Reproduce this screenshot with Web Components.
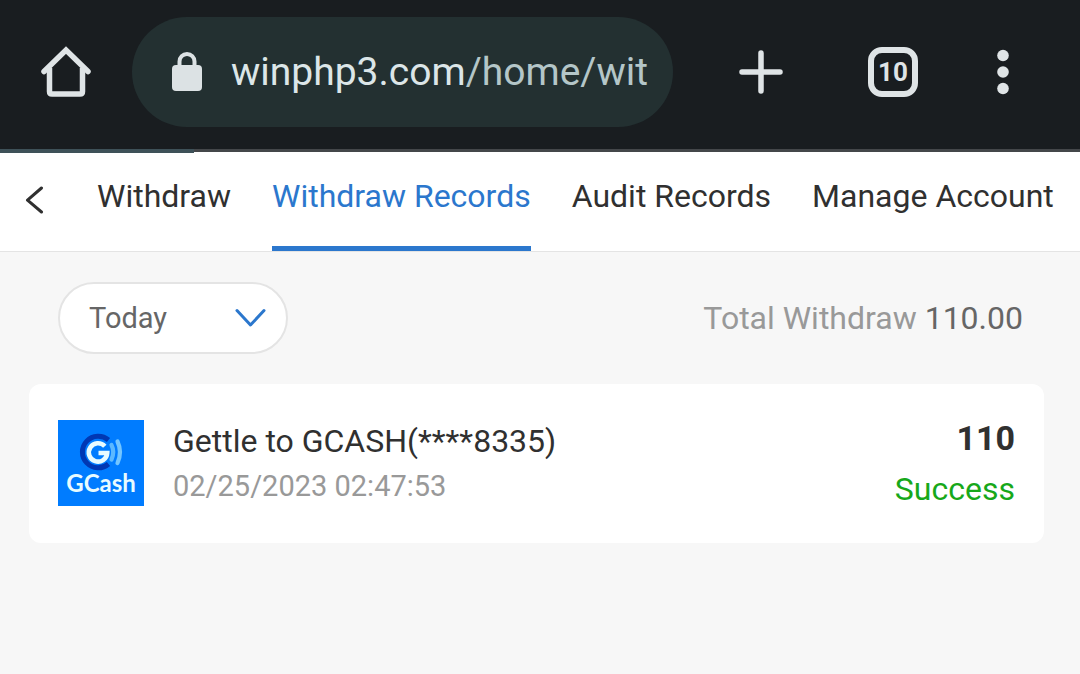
<!DOCTYPE html>
<html lang="en">
<head>
<meta charset="utf-8">
<meta name="viewport" content="width=device-width, initial-scale=1">
<title>Withdraw Records</title>
<style>
  html { background: #f7f7f7; }
  body { margin: 0; font-family: Roboto, "Liberation Sans", sans-serif; color: #303030; }
</style>
</head>
<body>
<browser-bar tabs="10" host="winphp3.com" path="/home/wit"></browser-bar>
<tab-nav>
  <tab-link href="#withdraw">Withdraw</tab-link>
  <tab-link href="#records" active>Withdraw Records</tab-link>
  <tab-link href="#audit">Audit Records</tab-link>
  <tab-link href="#account">Manage Account</tab-link>
</tab-nav>
<records-page>
  <range-select slot="filter"></range-select>
  <total-amount slot="total" label="Total Withdraw">110.00</total-amount>
  <record-card>
    <gcash-logo slot="logo"></gcash-logo>
    <span slot="title">Gettle to GCASH(****8335)</span>
    <time slot="time" datetime="2023-02-25T02:47:53">02/25/2023 02:47:53</time>
    <span slot="amount">110</span>
    <span slot="status">Success</span>
  </record-card>
</records-page>

<script>
class BaseElement extends HTMLElement {
  connectedCallback() {
    if (!this.shadowRoot) this.attachShadow({ mode: "open" }).innerHTML = this.render();
  }
}
const attr = (el, name) => el.getAttribute(name) || "";

customElements.define("browser-bar", class extends BaseElement {
  render() {
    return `
    <style>
      :host { display: block; background: #191d20; color: #dfe4e6; }
      header { display: grid; grid-template-columns: 132px 1fr 176px 88px 132px; align-items: center; padding: 17px 11px 22px 0; }
      button { font: inherit; color: inherit; background: none; border: 0; padding: 0; display: flex; align-items: center; justify-content: center; height: 110px; min-width: 0; }
      svg { display: block; flex: none; }
      .url { background: #233031; border-radius: 55px; padding: 0 20px 0 39px; gap: 28px; justify-content: flex-start; font: 39px/48px Roboto, sans-serif; color: #dce6e8; }
      .text { white-space: nowrap; }
      .path { color: #b4c6c8; }
      .count { box-sizing: border-box; width: 50px; height: 50px; border: 6px solid #dfe4e6; border-radius: 14px; font: bold 26px/38px Roboto, sans-serif; text-align: center; }
      .line { height: 3px; background: #44474a; }
      .progress { height: 4px; width: 18%; background: #3e5158; position: relative; }
    </style>
    <header>
      <button aria-label="Home"><svg width="52" height="52" viewBox="0 0 52 52" fill="none" stroke="#dfe4e6" stroke-width="5.5" stroke-linecap="round" stroke-linejoin="round"><path d="M4 25.500L26 4L48 25.500" stroke-linejoin="miter"/><path d="M9.500 22V45.500Q9.500 48 12 48H40Q42.500 48 42.500 45.500V22" stroke-linecap="butt"/></svg></button>
      <button class="url" aria-label="Address">
        <svg width="32" height="40" viewBox="0 0 32 40"><rect x="1" y="13" width="30" height="26" rx="4" fill="#dce2e4"/><path d="M8.500 15V9.500a7.500 7.500 0 0 1 15 0V15" fill="none" stroke="#dce2e4" stroke-width="4"/></svg>
        <span class="text">${attr(this, "host")}<span class="path">${attr(this, "path")}</span></span>
      </button>
      <button aria-label="New tab"><svg width="44" height="44" viewBox="0 0 44 44" stroke="#dfe4e6" stroke-width="5.500" stroke-linecap="round"><path d="M22 3V41M3 22H41"/></svg></button>
      <button aria-label="Open tabs"><span class="count">${attr(this, "tabs")}</span></button>
      <button aria-label="Menu"><svg width="12" height="46" viewBox="0 0 12 46" fill="#dfe4e6"><circle cx="6" cy="6.500" r="5.800"/><circle cx="6" cy="23" r="5.800"/><circle cx="6" cy="39.500" r="5.800"/></svg></button>
    </header>
    <div class="line"><div class="progress"></div></div>`;
  }
});

customElements.define("tab-nav", class extends BaseElement {
  render() {
    return `
    <style>
      :host { display: block; background: #fff; border-bottom: 1px solid #e4e4e4; }
      div { display: flex; }
      nav { display: flex; gap: 41px; }
      button { width: 97px; flex: none; padding: 0 0 4px 25px; border: 0; background: none; text-align: left; }
      svg { display: block; }
    </style>
    <div>
      <button aria-label="Back"><svg width="20" height="28" viewBox="0 0 20 28" fill="none" stroke="#303030" stroke-width="3" stroke-linecap="round" stroke-linejoin="round"><path d="M16.500 2L2.500 14.200L16.500 26"/></svg></button>
      <nav><slot></slot></nav>
    </div>`;
  }
});

customElements.define("tab-link", class extends BaseElement {
  render() {
    return `
    <style>
      :host { display: block; color: #303030; }
      :host([active]) { color: #2b77cd; }
      a { display: block; color: inherit; text-decoration: none; white-space: nowrap; font-size: 32px; line-height: 38px; padding: 25px 0 31px; border-bottom: 5px solid transparent; }
      :host([active]) a { border-color: #2b77cd; }
    </style>
    <a href="${attr(this, "href")}"><slot></slot></a>`;
  }
});

customElements.define("records-page", class extends BaseElement {
  render() {
    return `
    <style>
      :host { display: block; padding: 30px 36px 30px 29px; }
      .bar { display: flex; justify-content: space-between; align-items: center; margin-bottom: 30px; padding: 0 21px 0 29px; }
    </style>
    <main><div class="bar"><slot name="filter"></slot><slot name="total"></slot></div><slot></slot></main>`;
  }
});

customElements.define("range-select", class extends BaseElement {
  render() {
    return `
    <style>
      :host { display: grid; width: 230px; align-items: center; }
      select { grid-area: 1 / 1; appearance: none; box-sizing: border-box; width: 100%; height: 72px; margin: 0; border: 2px solid #e4e4e4; border-radius: 36px; background: #fff; padding: 0 60px 0 29px; font: 29px/36px Roboto, sans-serif; color: #666; }
      svg { grid-area: 1 / 1; justify-self: end; margin-right: 22px; pointer-events: none; }
    </style>
    <select aria-label="Date range"><option>Today</option><option>Yesterday</option><option>Last 7 days</option></select>
    <svg width="32" height="20" viewBox="0 0 32 20" fill="none" stroke="#2b77cd" stroke-width="3" stroke-linecap="round" stroke-linejoin="round"><path d="M3 2.500L16.500 17L30 2.500"/></svg>`;
  }
});

customElements.define("total-amount", class extends BaseElement {
  render() {
    return `
    <style>
      :host { display: block; font-size: 32px; line-height: 38px; color: #666; white-space: nowrap; }
      .label { color: #999; }
    </style>
    <span class="label">${attr(this, "label")}</span> <slot></slot>`;
  }
});

customElements.define("record-card", class extends BaseElement {
  render() {
    return `
    <style>
      :host { display: block; background: #fff; border-radius: 12px; padding: 34px 29px 35px; }
      article { display: flex; align-items: center; gap: 29px; }
      .info { flex: 1; }
      .info, .result { display: flex; flex-direction: column; }
      .info { gap: 8px; }
      .result { text-align: right; gap: 12px; }
      .title { font-size: 32px; line-height: 38px; }
      .time { font-size: 29px; line-height: 36px; color: #999; }
      .amount { font-size: 34px; line-height: 40px; font-weight: bold; }
      .status { font-size: 32px; line-height: 38px; color: #17a81a; }
    </style>
    <article>
      <slot name="logo"></slot>
      <div class="info"><div class="title"><slot name="title"></slot></div><div class="time"><slot name="time"></slot></div></div>
      <div class="result"><div class="amount"><slot name="amount"></slot></div><div class="status"><slot name="status"></slot></div></div>
    </article>`;
  }
});

customElements.define("gcash-logo", class extends BaseElement {
  render() {
    return `
    <style>:host { display: block; flex: none; } svg { display: block; }</style>
    <svg width="86" height="86" viewBox="0 0 86 86" role="img" aria-label="GCash">
      <rect width="86" height="86" fill="#007cff"/>
      <g fill="none">
        <path d="M50.500 20A15.800 15.800 0 1 0 50.500 44" stroke="#0038b4" stroke-width="5"/>
        <path d="M46.800 26.200A9.200 9.200 0 1 0 49.200 33H40.500" stroke="#e8fbff" stroke-width="4.600"/>
        <path d="M53.500 25Q57 32 53.500 39.500" stroke="#5cb9ff" stroke-width="4.200" stroke-linecap="round"/>
        <path d="M59.500 21.500Q64.500 32 59.500 43" stroke="#74c6ff" stroke-width="4.200" stroke-linecap="round"/>
      </g>
      <text x="43" y="72" text-anchor="middle" font-family="Lato, sans-serif" font-weight="bold" font-size="24" fill="#e8fbff">GCash</text>
    </svg>`;
  }
});
</script>
</body>
</html>
